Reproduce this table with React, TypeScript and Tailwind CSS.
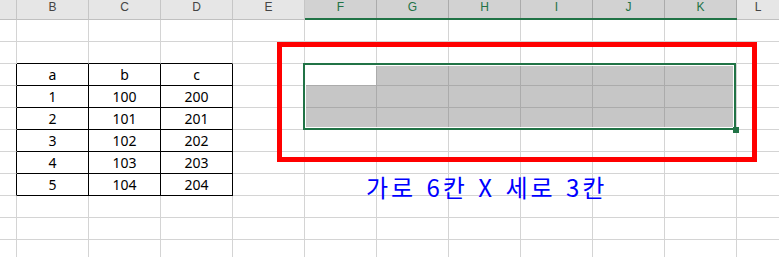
const COLS = ["", "B", "C", "D", "E", "F", "G", "H", "I", "J", "K", "L"];
const ROW_COUNT = 11;

// small data table drawn in B3:D8
const TABLE: string[][] = [
  ["a", "b", "c"],
  ["1", "100", "200"],
  ["2", "101", "201"],
  ["3", "102", "202"],
  ["4", "103", "203"],
  ["5", "104", "204"],
];

const inTable = (c: number, r: number) => c >= 1 && c <= 3 && r >= 2 && r <= 7;
const inSel = (c: number, r: number) => c >= 5 && c <= 10 && r >= 2 && r <= 4;

function HeaderCell({ label, index }: { label: string; index: number }) {
  const selected = index >= 5 && index <= 10;
  return (
    <div
      className={
        selected
          ? "h-[20px] bg-[#d2d2d2] border-r border-[#ababab] flex justify-center text-[#217346] relative"
          : "h-[20px] bg-[#e6e6e6] border-r border-[#c6c6c6] border-b border-b-[#c0c0c0] flex justify-center text-[#444444]"
      }
    >
      <span className="text-[12px] leading-[14px] font-['Liberation_Sans',sans-serif]">{label}</span>
      {selected && <div className="absolute left-0 right-[-1px] bottom-0 h-[2px] bg-[#217346]" />}
    </div>
  );
}

function Cell({ c, r }: { c: number; r: number }) {
  const sel = inSel(c, r);
  const rightBlack = c >= 0 && c <= 3 && r >= 2 && r <= 7;
  const bottomBlack = c >= 1 && c <= 3 && r >= 1 && r <= 7;
  const right = rightBlack
    ? "border-r-black"
    : sel && c < 10
      ? "border-r-[#ababab]"
      : "border-r-[#d4d4d4]";
  const bottom = bottomBlack
    ? "border-b-black"
    : sel && r < 4
      ? "border-b-[#ababab]"
      : "border-b-[#d4d4d4]";
  const fill = sel && !(c === 5 && r === 2) ? "bg-[#c6c6c6]" : "bg-white";
  const text = inTable(c, r) ? TABLE[r - 2][c - 1] : "";
  return (
    <div
      className={`h-[22px] border-r border-b ${right} ${bottom} ${fill} flex items-center justify-center text-[14px] text-black`}
    >
      {text}
    </div>
  );
}

export default function App() {
  return (
    <div className="relative w-[779px] h-[257px] overflow-hidden bg-white font-['Noto_Sans','Noto_Sans_CJK_KR',sans-serif]">
      <div className="grid grid-cols-[17px_repeat(10,72px)_43px]">
        {COLS.map((label, i) => (
          <HeaderCell key={`h${i}`} label={label} index={i} />
        ))}
        {Array.from({ length: ROW_COUNT }).map((_, r) =>
          COLS.map((_, c) => <Cell key={`${r}-${c}`} c={c} r={r} />)
        )}
      </div>

      {/* active selection F3:K5 */}
      <div className="absolute left-[303px] top-[63px] w-[433px] h-[67px] border-2 border-[#217346]">
        <div className="absolute inset-0 border border-white" />
      </div>
      <div className="absolute left-[733px] top-[127px] w-[6px] h-[6px] bg-[#217346]" />

      {/* red callout box */}
      <div className="absolute left-[277px] top-[42px] w-[480px] h-[120px] border-[5px] border-[#ff0000]" />

      <div className="absolute left-[366px] top-[169px] text-[24px] leading-[36px] tracking-[3px] [word-spacing:2px] text-[#0000ff] whitespace-nowrap font-['Noto_Sans_CJK_KR',sans-serif]">
        가로 6칸 X 세로 3칸
      </div>
    </div>
  );
}
